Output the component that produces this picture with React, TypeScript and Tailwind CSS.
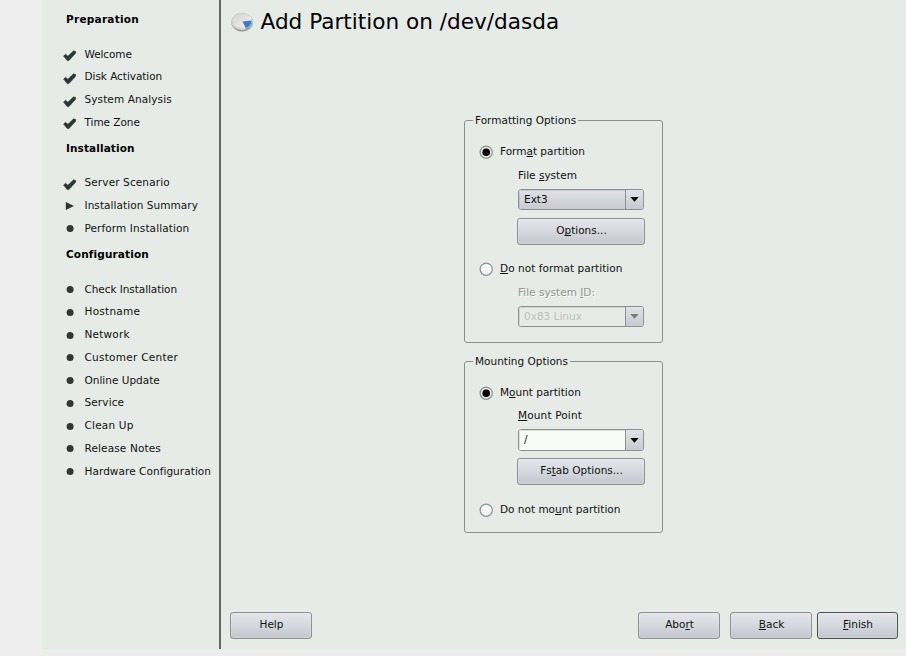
import type { ReactNode } from "react";

type StepState = "done" | "current" | "todo";

const sections: { title: string; tracking: string; steps: [string, StepState, string][] }[] = [
  {
    title: "Preparation",
    tracking: "tracking-[0.26px]",
    steps: [
      ["Welcome", "done", "tracking-[-0.1px]"],
      ["Disk Activation", "done", "tracking-[-0.05px]"],
      ["System Analysis", "done", "tracking-[0.1px]"],
      ["Time Zone", "done", "tracking-[-0.05px]"],
    ],
  },
  {
    title: "Installation",
    tracking: "tracking-[0.1px]",
    steps: [
      ["Server Scenario", "done", "tracking-[0.12px]"],
      ["Installation Summary", "current", "tracking-[0.06px]"],
      ["Perform Installation", "todo", "tracking-[0.1px]"],
    ],
  },
  {
    title: "Configuration",
    tracking: "tracking-[0.14px]",
    steps: [
      ["Check Installation", "todo", "tracking-[-0.07px]"],
      ["Hostname", "todo", "tracking-[0.25px]"],
      ["Network", "todo", "tracking-[0.2px]"],
      ["Customer Center", "todo", "tracking-[0.26px]"],
      ["Online Update", "todo", "tracking-normal"],
      ["Service", "todo", "tracking-[0.12px]"],
      ["Clean Up", "todo", "tracking-[0.2px]"],
      ["Release Notes", "todo", "tracking-[0.13px]"],
      ["Hardware Configuration", "todo", "tracking-[0.06px]"],
    ],
  },
];

function StepIcon({ state }: { state: StepState }) {
  return (
    <svg className="h-[22px] w-[15px] shrink-0" viewBox="0 0 15 22">
      {state === "done" && (
        <path
          d="M0.6 13.1 2.6 11.3 4.9 13.3 10.6 7.8 12.7 8.6 12.6 10.3 5.9 17.6 4.2 17.6Z"
          fill="#2b3735"
          stroke="#2b3735"
          strokeWidth="0.6"
          strokeLinejoin="round"
        />
      )}
      {state === "current" && <path d="M2.8 7 11 11 2.8 15Z" fill="#2b3735" />}
      {state === "todo" && <circle cx="7.1" cy="11.4" r="3.5" fill="#333635" />}
    </svg>
  );
}

function Mn({ children }: { children: ReactNode }) {
  return <span className="underline decoration-1 underline-offset-[1px] [text-decoration-skip-ink:none]">{children}</span>;
}

function Button({ children, className }: { children: ReactNode; className: string }) {
  return (
    <button
      className={`flex h-[27px] items-center justify-center rounded-[3px] border pb-[3px] pl-[1px] leading-[12px] bg-linear-to-b from-[#e3e5ea] via-[#d5d8de] to-[#c3c6cb] shadow-[inset_0_0_0_1px_#ffffff30] ${className}`}
    >
      <span>{children}</span>
    </button>
  );
}

function Radio({ checked, children, className }: { checked?: boolean; children: ReactNode; className: string }) {
  return (
    <label className={`flex h-[14px] items-center ${className}`}>
      <svg className="mr-[7px] h-[14px] w-[14px] shrink-0" viewBox="0 0 14 14">
        <circle cx="7.2" cy="7.2" r="6.1" fill={checked ? "#e3e5e4" : "#f5f7f6"} stroke="#8f9291" strokeWidth="1.2" />
        {checked && <circle cx="7.2" cy="7.2" r="3.8" fill="#000" />}
      </svg>
      <span className="-mt-[2px] leading-[12px]">{children}</span>
    </label>
  );
}

function Combo({ kind, children, className }: { kind: "list" | "disabled" | "edit"; children: ReactNode; className: string }) {
  const fill = {
    list: "bg-linear-to-b from-[#e0e2e7] to-[#c7cacf]",
    disabled: "bg-[#e6ebe7] text-[#bcc0bd]",
    edit: "bg-[#f8fcf8]",
  }[kind];
  return (
    <div className={`ml-[53px] flex w-[126px] overflow-hidden rounded-[3px] border border-[#8c908e] ${className}`}>
      <div className={`flex-1 pt-[3px] pl-[5px] leading-[12px] shadow-[inset_1px_1px_0_#8c908e40] ${fill}`}>{children}</div>
      <div className="flex w-[18px] items-center justify-center border-l border-[#8c908e] bg-linear-to-b from-[#e0e2e7] to-[#c7cacf]">
        <svg className="h-[5px] w-[9px]" viewBox="0 0 9 5">
          <path d="M0.3 0H8.7L4.5 4.8Z" fill={kind === "disabled" ? "#777b7c" : "#000"} />
        </svg>
      </div>
    </div>
  );
}

function Group({ title, children, className }: { title: string; children: ReactNode; className: string }) {
  return (
    <section className={`w-[199px] rounded-[3px] border border-[#8c908e] ${className}`}>
      <h2 className="-mt-[8px] ml-[8px] h-[14px] w-fit bg-[#e6ebe7] px-[2px] leading-[14px]">{title}</h2>
      {children}
    </section>
  );
}

export default function App() {
  return (
    <div className="h-[656px] w-[906px] overflow-hidden bg-[#ededed] pl-[42px] font-['DejaVu_Sans',sans-serif] text-[10.5px] text-[#101211]">
      <div className="flex h-[649px] bg-[#e6ebe7]">
        <aside className="w-[179px] shrink-0 border-r-2 border-[#636665] pt-[5px]">
          {sections.map((section) => (
            <div key={section.title}>
              <h2 className={`h-[37.8px] pt-[7px] pl-[24px] text-[10.5px] leading-[14px] font-bold text-black ${section.tracking}`}>
                {section.title}
              </h2>
              <ul>
                {section.steps.map(([name, state, tracking]) => (
                  <li key={name} className="flex h-[22.75px] items-center pl-[21px] whitespace-nowrap">
                    <StepIcon state={state} />
                    <span className={`ml-[6.5px] pb-[1px] leading-[14px] ${tracking}`}>{name}</span>
                  </li>
                ))}
              </ul>
            </div>
          ))}
        </aside>
        <main className="flex flex-1 flex-col">
          <header className="flex h-[44px] items-center pl-[10px]">
            <svg className="h-[22px] w-[24px]" viewBox="0 0 24 22">
              <defs>
                <linearGradient id="disk" x1="0" y1="0" x2="1" y2="1">
                  <stop offset="0" stopColor="#d0d3ce" />
                  <stop offset="1" stopColor="#f2f4f0" />
                </linearGradient>
                <linearGradient id="rim" x1="0" y1="0" x2="1" y2="0">
                  <stop offset="0" stopColor="#b4b7b3" />
                  <stop offset="0.4" stopColor="#8f928f" />
                  <stop offset="1" stopColor="#b4b7b3" />
                </linearGradient>
              </defs>
              <ellipse cx="11.2" cy="12" rx="11" ry="8.6" fill="url(#rim)" />
              <ellipse cx="11.2" cy="10.6" rx="10.8" ry="8.4" fill="#dadcd8" />
              <ellipse cx="11.2" cy="9.8" rx="10.4" ry="7.6" fill="url(#disk)" stroke="#bfc2be" strokeWidth="0.6" />
              <path d="M11.6 10.4 20.6 9.6Q21 13.6 14.8 17.2Z" fill="#3f7ac6" />
              <path d="M20.6 9.6Q21 13.6 14.8 17.2L15 18.8Q21.6 15.8 21.2 10.4Z" fill="#7f9fc6" />
            </svg>
            <h1 className="ml-[5.5px] text-[21.6px] leading-[24px] whitespace-nowrap text-black">Add Partition on /dev/dasda</h1>
          </header>
          <div className="ml-[243px] flex-1 pt-[76px]">
            <Group title="Formatting Options" className="h-[223px]">
              <Radio checked className="mt-[18px] ml-[14px]">Form<Mn>a</Mn>t partition</Radio>
              <div className="mt-[10px] ml-[53px] leading-[12px]">File <Mn>s</Mn>ystem</div>
              <Combo kind="list" className="mt-[8px] h-[21px]">Ext3</Combo>
              <Button className="mt-[8px] ml-[52px] w-[128px] border-[#8c908e]">O<Mn>p</Mn>tions...</Button>
              <Radio className="mt-[17px] ml-[14px] tracking-[0.05px]"><Mn>D</Mn>o not format partition</Radio>
              <div className="mt-[10px] ml-[53px] leading-[12px] text-[#8f9391] [text-shadow:1px_1px_0_#f8faf8]">File system <Mn>I</Mn>D:</div>
              <Combo kind="disabled" className="mt-[8px] h-[21px]">0x83 Linux</Combo>
            </Group>
            <Group title="Mounting Options" className="mt-[18px] h-[172px]">
              <Radio checked className="mt-[18px] ml-[14px]">M<Mn>o</Mn>unt partition</Radio>
              <div className="mt-[9px] ml-[53px] leading-[12px] tracking-[0.15px]"><Mn>M</Mn>ount Point</div>
              <Combo kind="edit" className="mt-[8px] h-[22px]">/</Combo>
              <Button className="mt-[7px] ml-[52px] w-[128px] border-[#8c908e]">Fs<Mn>t</Mn>ab Options...</Button>
              <Radio className="mt-[18px] ml-[14px]">Do not mo<Mn>u</Mn>nt partition</Radio>
            </Group>
          </div>
          <footer className="flex pr-[8px] pb-[10px] pl-[9px]">
            <Button className="w-[82px] border-[#8c908e]">Help</Button>
            <Button className="ml-auto w-[82px] border-[#8c908e]">Abo<Mn>r</Mn>t</Button>
            <Button className="ml-[10px] w-[82px] border-[#8c908e]"><Mn>B</Mn>ack</Button>
            <Button className="ml-[5px] w-[81px] border-[#4c504e]"><Mn>F</Mn>inish</Button>
          </footer>
        </main>
      </div>
    </div>
  );
}
